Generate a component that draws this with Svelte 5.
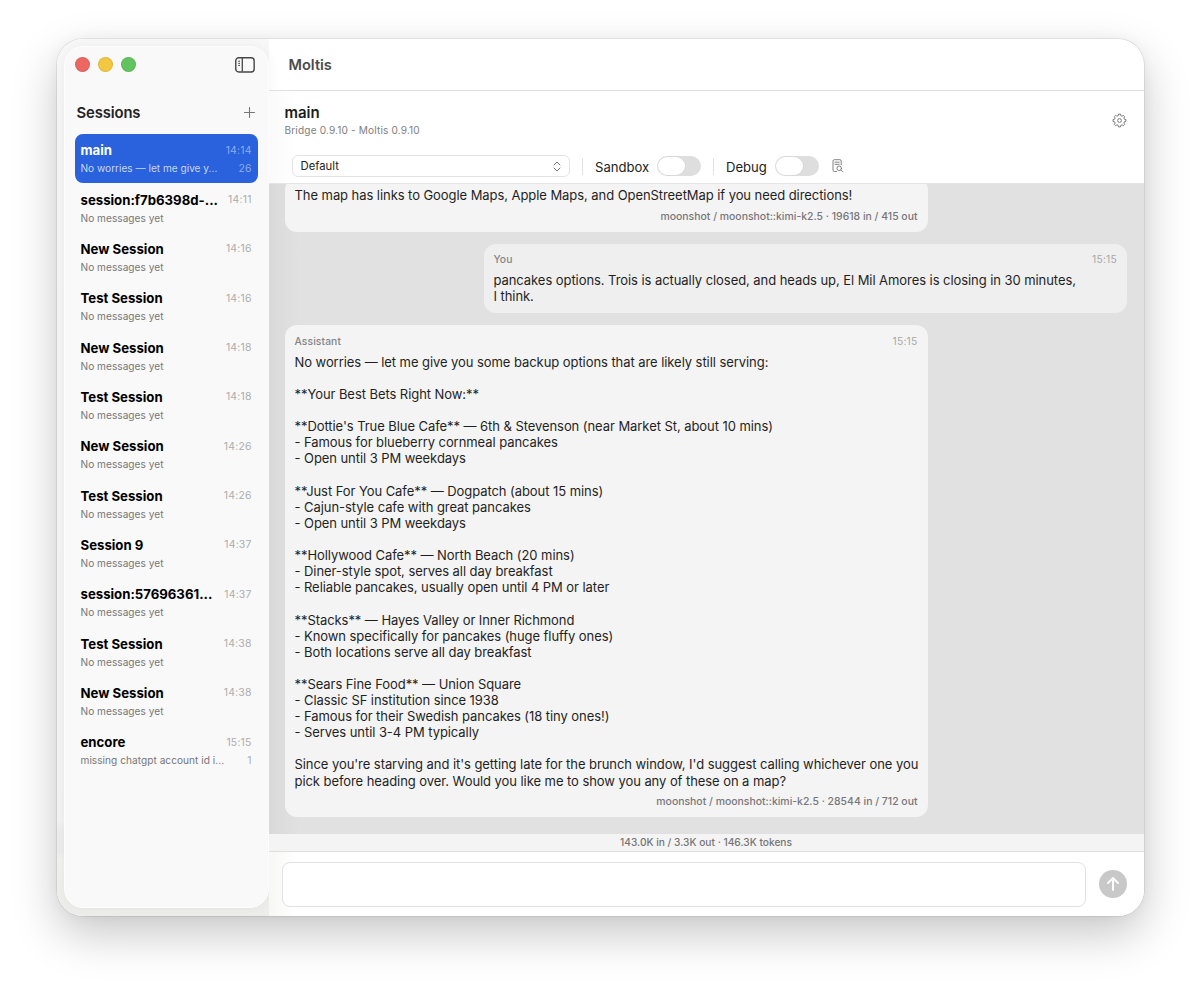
<script>
  const sessions = [
    { name: 'main', time: '14:14', note: 'No worries — let me give y...', count: '26', active: true },
    { name: 'session:f7b6398d-...', time: '14:11', note: 'No messages yet' },
    { name: 'New Session', time: '14:16', note: 'No messages yet' },
    { name: 'Test Session', time: '14:16', note: 'No messages yet' },
    { name: 'New Session', time: '14:18', note: 'No messages yet' },
    { name: 'Test Session', time: '14:18', note: 'No messages yet' },
    { name: 'New Session', time: '14:26', note: 'No messages yet' },
    { name: 'Test Session', time: '14:26', note: 'No messages yet' },
    { name: 'Session 9', time: '14:37', note: 'No messages yet' },
    { name: 'session:57696361...', time: '14:37', note: 'No messages yet' },
    { name: 'Test Session', time: '14:38', note: 'No messages yet' },
    { name: 'New Session', time: '14:38', note: 'No messages yet' },
    { name: 'encore', time: '15:15', note: 'missing chatgpt account id i...', count: '1' }
  ];

  const messages = [
    {
      from: 'assistant',
      text: 'The map has links to Google Maps, Apple Maps, and OpenStreetMap if you need directions!',
      usage: 'moonshot / moonshot::kimi-k2.5 · 19618 in / 415 out'
    },
    {
      from: 'user',
      author: 'You',
      time: '15:15',
      text: 'pancakes options. Trois is actually closed, and heads up, El Mil Amores is closing in 30 minutes,\nI think.'
    },
    {
      from: 'assistant',
      author: 'Assistant',
      time: '15:15',
      text: `No worries — let me give you some backup options that are likely still serving:

**Your Best Bets Right Now:**

**Dottie's True Blue Cafe** — 6th & Stevenson (near Market St, about 10 mins)
- Famous for blueberry cornmeal pancakes
- Open until 3 PM weekdays

**Just For You Cafe** — Dogpatch (about 15 mins)
- Cajun-style cafe with great pancakes
- Open until 3 PM weekdays

**Hollywood Cafe** — North Beach (20 mins)
- Diner-style spot, serves all day breakfast
- Reliable pancakes, usually open until 4 PM or later

**Stacks** — Hayes Valley or Inner Richmond
- Known specifically for pancakes (huge fluffy ones)
- Both locations serve all day breakfast

**Sears Fine Food** — Union Square
- Classic SF institution since 1938
- Famous for their Swedish pancakes (18 tiny ones!)
- Serves until 3-4 PM typically

Since you're starving and it's getting late for the brunch window, I'd suggest calling whichever one you
pick before heading over. Would you like me to show you any of these on a map?`,
      usage: 'moonshot / moonshot::kimi-k2.5 · 28544 in / 712 out'
    }
  ];

  // Eight-tooth gear outline: each tooth has two outer and two inner corners.
  const corners = [[-14, 5.1], [-8.5, 6.5], [8.5, 6.5], [14, 5.1]];
  const gear = Array.from({ length: 8 }, (_, tooth) =>
    corners.map(([offset, radius]) => {
      const a = ((tooth * 45 + offset) * Math.PI) / 180;
      return `${(7.5 + radius * Math.sin(a)).toFixed(2)},${(7.5 - radius * Math.cos(a)).toFixed(2)}`;
    })
  ).flat().join(' ');
</script>

<div class="desktop">
  <div class="window">
    <aside>
      <div class="panel">
        <div class="chrome">
          <i class="light red"></i><i class="light yellow"></i><i class="light green"></i>
          <svg class="toggle-icon" width="20" height="16" viewBox="0 0 20 16" fill="none" stroke="#454545">
            <rect x=".75" y=".75" width="18.4" height="14.2" rx="3" stroke-width="1.4" />
            <path d="M7.3 1v13.6" stroke-width="1.3" />
            <path d="M3.2 4.2h1.8M3.2 6.3h1.8M3.2 8.4h1.8" stroke-width="1" />
          </svg>
        </div>
        <div class="side-head">
          <h2>Sessions</h2>
          <svg width="11" height="11" viewBox="0 0 11 11" stroke="#777" stroke-width="1.1" stroke-linecap="round"><path d="M5.5.5v10M.5 5.5h10" /></svg>
        </div>
        <ul>
          {#each sessions as s}
            <li class:active={s.active}>
              <div class="line"><b>{s.name}</b><span class="time">{s.time}</span></div>
              <div class="line note"><span>{s.note}</span>{#if s.count}<span class="count">{s.count}</span>{/if}</div>
            </li>
          {/each}
        </ul>
      </div>
    </aside>

    <main>
      <div class="titlebar">Moltis</div>
      <header>
        <div class="top">
          <div>
            <h1>main</h1>
            <p>Bridge 0.9.10 - Moltis 0.9.10</p>
          </div>
          <svg class="gear" width="15" height="15" viewBox="0 0 15 15" fill="none" stroke="#7b7b7b" stroke-width="1" stroke-linejoin="round">
            <polygon points={gear} />
            <circle cx="7.5" cy="7.5" r="1.9" />
          </svg>
        </div>
        <div class="tools">
          <div class="select">
            Default
            <svg width="8" height="11" viewBox="0 0 8 11" fill="none" stroke="#777" stroke-width="1" stroke-linecap="round" stroke-linejoin="round"><path d="M1 4l3-3 3 3M1 7l3 3 3-3" /></svg>
          </div>
          <i class="sep"></i>
          <span class="label sandbox">Sandbox</span><i class="switch"></i>
          <i class="sep second"></i>
          <span class="label debug">Debug</span><i class="switch"></i>
          <svg class="doc" width="12" height="14" viewBox="0 0 12 14" fill="none" stroke="#777" stroke-width=".9" stroke-linecap="round">
            <path d="M4.7 12.5H2.3C1.4 12.5 1 12 1 11.2V2C1 1.1 1.4.7 2.3.7h5.6C8.8.7 9.2 1.1 9.2 2v4M3 3.2h4.2M3 5.3h4.2" />
            <circle cx="7.2" cy="9.3" r="2.3" /><path d="M8.9 11l1.9 1.9" />
          </svg>
        </div>
      </header>

      <section class="chat">
        {#each messages as m}
          <article class={m.from}>
            {#if m.author}
              <div class="meta"><span>{m.author}</span><time>{m.time}</time></div>
            {/if}
            <div class="text">{m.text}</div>
            {#if m.usage}<div class="usage">{m.usage}</div>{/if}
          </article>
        {/each}
      </section>

      <div class="status">143.0K in / 3.3K out · 146.3K tokens</div>
      <footer>
        <div class="input"></div>
        <div class="send">
          <svg width="14" height="16" viewBox="0 0 14 16" fill="none" stroke="#fff" stroke-width="2" stroke-linecap="round" stroke-linejoin="round"><path d="M7 14V2M2 7l5-5 5 5" /></svg>
        </div>
      </footer>
    </main>
  </div>
</div>

<style>
  :global(body) { background: #fff; }
  * { box-sizing: border-box; margin: 0; }
  .desktop {
    height: 991px;
    padding: 39px 56.5px 75px 56.5px;
    overflow: hidden;
    font-family: Inter, 'Liberation Sans', sans-serif;
    color: #222;
  }
  .window {
    display: flex;
    height: 877px;
    border-radius: 26px;
    background: #fff;
    overflow: hidden;
    box-shadow: 0 0 0 .8px rgba(0, 0, 0, .09), 0 18px 46px rgba(0, 0, 0, .22), 0 0 14px rgba(0, 0, 0, .04);
  }
  aside {
    width: 212px;
    flex: none;
    padding: 7px 0 8px 7px;
    background: linear-gradient(#f8f8f8 0, #f5f5f5 80px, #f3f3f3 780px, #ececec 795px, #ececec 812px, #f1f1ef 820px, #ededeb 877px);
  }
  .panel {
    height: 862px;
    width: 205px;
    padding: 0 11px 0 10.5px;
    border-radius: 19px;
    background: #f9f9f9;
    border: 1px solid #fdfdfd;
    box-shadow: 0 0 12px rgba(0, 0, 0, .05);
  }
  .chrome { display: flex; align-items: center; height: 35px; gap: 8px; padding: 0 1.5px 0 0; }
  .light { width: 15px; height: 15px; border-radius: 50%; border: .5px solid rgba(0, 0, 0, .08); }
  .red { background: #ed6762; }
  .yellow { background: #f3c742; }
  .green { background: #62c45f; }
  .toggle-icon { margin-left: auto; }
  .side-head { display: flex; align-items: center; justify-content: space-between; height: 52px; padding: 9px 1.5px 0; }
  h2 { font-size: 14.8px; font-weight: 600; letter-spacing: -.1px; color: #222; }
  ul { padding: 0; list-style: none; width: 183.5px; margin-left: -.3px; }
  li { height: 49.35px; padding: 7.7px 6.6px 0 5.8px; border-radius: 8px; }
  .active { background: #2962dc; }
  .line { display: flex; align-items: center; justify-content: space-between; height: 17px; white-space: nowrap; }
  .line b { font-size: 13.2px; font-weight: 700; color: #000; }
  .time, .count { font-size: 10.4px; color: #adadad; letter-spacing: .22px; }
  .line.note { font-size: 10.1px; color: #777; height: 19px; letter-spacing: .04px; }
  .active b { color: #fff; }
  .active .line.note { color: #c8d6f6; letter-spacing: 0; }
  .active .time, .active .count { color: #8eacec; }

  main { flex: 1; min-width: 0; display: flex; flex-direction: column; }
  .titlebar { height: 52px; padding-left: 20px; border-bottom: 1px solid #e0e0e0; font-size: 14.6px; font-weight: 600; line-height: 52px; color: #4b4b4b; flex: none; }
  header { height: 93px; flex: none; border-bottom: 1px solid #e5e5e5; background: linear-gradient(90deg, #fbfafb, #fff 28px); }
  .top { display: flex; justify-content: space-between; height: 59px; padding: 12px 17px 0 16px; }
  h1 { font-size: 15px; line-height: 20px; font-weight: 600; color: #1c1c1c; }
  .top p { font-size: 10.1px; line-height: 15px; letter-spacing: .15px; color: #808080; }
  .gear { margin-top: 9.5px; }
  .tools { display: flex; align-items: center; height: 32px; padding-left: 23.5px; }
  .select { display: flex; align-items: center; justify-content: space-between; width: 278px; height: 22px; padding: 0 8px 0 7.5px; border: 1px solid #e3e3e3; border-radius: 6px; background: #fff; font-size: 11.3px; }
  .sep { width: 1px; height: 17px; margin-left: 12px; background: #e2e2e2; }
  .label { margin-left: 12px; padding-top: 1px; font-size: 13.1px; }
  .sandbox { width: 54px; margin-right: 8px; }
  .debug { width: 41px; margin-right: 8px; }
  .switch { width: 44px; height: 20px; padding: 1px; border-radius: 10px; background: #dedede; }
  .switch::before { content: ''; display: block; width: 27px; height: 18px; border-radius: 9px; background: #fff; box-shadow: 0 0 2px rgba(0, 0, 0, .08); }
  .doc { margin-left: 13px; }

  .chat { flex: 1; min-height: 0; display: flex; flex-direction: column; justify-content: flex-end; gap: 12px; padding: 0 16.5px 17px 16px; overflow: hidden; background: linear-gradient(90deg, #d9d9d9, #e1e1e1 30px); }
  article { width: 643px; flex: none; padding: 9px 10px 4.3px; border-radius: 12px; background: #f4f4f4; }
  .user { align-self: flex-end; padding: 8.5px 10px 9px 9.5px; background: #efefef; }
  .meta { display: flex; justify-content: space-between; height: 19.7px; font-size: 10.3px; line-height: 15px; font-weight: 500; color: #858585; letter-spacing: .1px; }
  .user .meta { height: 19.5px; line-height: 14px; }
  .meta time { font-weight: 400; color: #a8a8a8; letter-spacing: .22px; }
  .text { font-size: 13px; line-height: 16.115px; letter-spacing: -.065px; white-space: pre; color: #1f1f1f; }
  .usage { height: 24px; text-align: right; font-size: 10.45px; line-height: 25px; font-weight: 500; color: #77777b; }
  .status { height: 17px; flex: none; background: #f4f4f4; text-align: center; font-size: 10.2px; line-height: 17px; font-weight: 500; color: #747474; }
  footer { display: flex; align-items: center; justify-content: space-between; height: 65px; flex: none; padding: 0 16.5px 0 13.5px; border-top: 1px solid #dfdfdf; background: linear-gradient(90deg, #f7f7f6, #fff 28px); }
  .input { width: 804px; height: 45px; border: 1px solid #e1e1e1; border-radius: 8px; background: #fff; }
  .send { display: flex; align-items: center; justify-content: center; width: 28px; height: 28px; border-radius: 50%; background: #c8c8c8; }
</style>
